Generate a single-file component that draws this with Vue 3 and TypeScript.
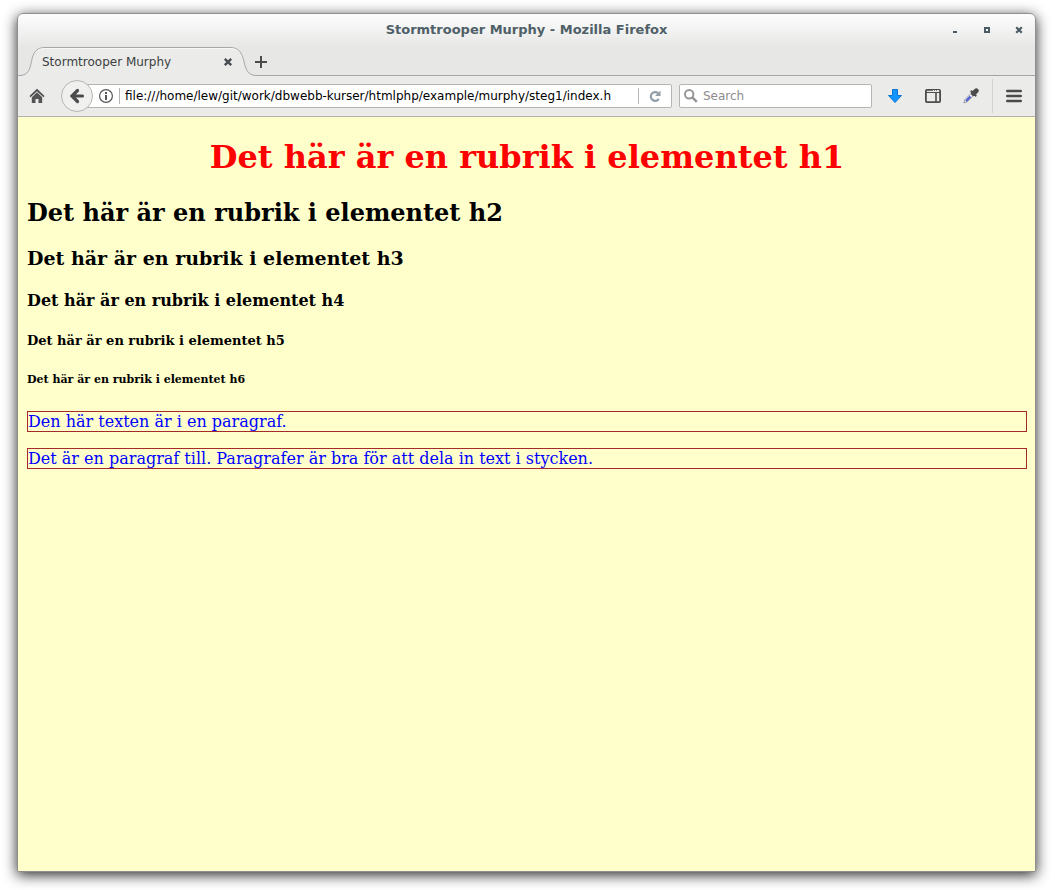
<script setup lang="ts">
import { ref } from 'vue'

const title = 'Stormtrooper Murphy'
const address = ref('file:///home/lew/git/work/dbwebb-kurser/htmlphp/example/murphy/steg1/index.h')
const query = ref('')
const paragraphs: string[] = [
  'Den här texten är i en paragraf.',
  'Det är en paragraf till. Paragrafer är bra för att dela in text i stycken.',
]
</script>

<template>
  <div class="desktop">
    <div class="window">
      <header class="titlebar">
        <span class="window-title">{{ title }} - Mozilla Firefox</span>
        <div class="window-buttons">
          <button aria-label="Minimize">
            <svg width="8" height="8" viewBox="0 0 8 8"><path d="M2 5h4v2H2z" fill="#4b5b63" /></svg>
          </button>
          <button aria-label="Maximize">
            <svg width="8" height="8" viewBox="0 0 8 8"><path d="M2 2h4v4H2z" fill="#fff" stroke="#4b5b63" stroke-width="2" /></svg>
          </button>
          <button aria-label="Close">
            <svg width="8" height="8" viewBox="0 0 8 8"><path d="M2 2l4 4M6 2L2 6" stroke="#4b5b63" stroke-width="2.2" stroke-linecap="square" /></svg>
          </button>
        </div>
      </header>

      <div class="tabs">
        <div class="tab">
          <svg class="tab-shape" width="240" height="30" viewBox="0 0 240 30" aria-hidden="true">
            <path d="M0 30V28.500H2C10 28.500 12 22 13.500 14.500C15 6 18 .5 27 .5H212C221 .5 224 6 226 14.500C227.500 22 230 28.500 238 28.500H240V30Z" fill="#ebebea" />
            <path d="M0 28.500H2C10 28.500 12 22 13.500 14.500C15 6 18 .5 27 .5H212C221 .5 224 6 226 14.500C227.500 22 230 28.500 238 28.500H240" fill="none" stroke="#a5a8ab" />
            <path d="M20 3.500Q23 1.500 27 1.500H212Q216 1.500 219 3.500" fill="none" stroke="#f8f8f8" />
          </svg>
          <span class="tab-label">{{ title }}</span>
          <button class="tab-close" aria-label="Close tab">
            <svg width="10" height="10" viewBox="0 0 10 10"><path d="M1.800 1.800l6.400 6.400M8.200 1.800L1.800 8.200" stroke="#484d50" stroke-width="2.400" /></svg>
          </button>
        </div>
        <button class="new-tab" aria-label="New tab">
          <svg width="12" height="12" viewBox="0 0 12 12"><path d="M6 0v12M0 6h12" stroke="#4c4c4c" stroke-width="2" /></svg>
        </button>
      </div>

      <nav class="toolbar">
        <button class="home" aria-label="Home">
          <svg width="16" height="16" viewBox="0 0 16 16">
            <path d="M8 .8L15.500 8l-1 1.300L8 3.200 1.500 9.300.5 8Z" fill="#4c4c4c" />
            <path d="M8 4.200l5.200 5V15H9.500v-4h-3v4H2.800V9.200Z" fill="#555" />
          </svg>
        </button>
        <button class="back" aria-label="Back">
          <svg width="16" height="16" viewBox="0 0 16 16"><path d="M8.500 2.500L3 8l5.500 5.500M3.500 8h10" fill="none" stroke="#4c4c4c" stroke-width="3.200" stroke-linecap="round" /></svg>
        </button>
        <div class="address">
          <svg class="info" width="14" height="14" viewBox="0 0 14 14" aria-hidden="true">
            <circle cx="7" cy="7" r="6.400" fill="none" stroke="#555" stroke-width="1.200" />
            <path d="M6 3h2v2H6zM6 6h2v5H6z" fill="#555" />
          </svg>
          <input v-model="address" aria-label="Address" spellcheck="false" />
          <button aria-label="Reload">
            <svg width="12" height="12" viewBox="0 0 12 12">
              <path d="M9.200 3.200A4.400 4.400 0 1 0 9.800 9" fill="none" stroke="#929da6" stroke-width="2.200" />
              <path d="M11.500.5V6H6Z" fill="#929da6" />
            </svg>
          </button>
        </div>
        <div class="search">
          <svg width="14" height="14" viewBox="0 0 14 14" aria-hidden="true">
            <circle cx="5.200" cy="5.200" r="4.200" fill="none" stroke="#969696" stroke-width="2" />
            <path d="M8.300 8.300l4.500 4.500" stroke="#969696" stroke-width="2.600" />
          </svg>
          <input v-model="query" aria-label="Search" placeholder="Search" />
        </div>
        <div class="tools">
          <button aria-label="Downloads">
            <svg width="16" height="16" viewBox="0 0 16 16"><path d="M5.500 1.500h5v6h4L8 14.500 1.500 7.500h4Z" fill="#1295ff" stroke="#0d73d0" /></svg>
          </button>
          <button aria-label="Sidebar">
            <svg width="16" height="16" viewBox="0 0 16 16">
              <rect x=".9" y="1.900" width="14.200" height="12.200" rx="1" fill="none" stroke="#4c4c4c" stroke-width="1.800" />
              <path d="M1 4.500h14" stroke="#4c4c4c" />
              <path d="M8 2.500h1M10 2.500h1M12 2.500h2" stroke="#eee" />
              <path d="M11 5v9" stroke="#4c4c4c" stroke-width="1.600" />
            </svg>
          </button>
          <button aria-label="Eyedropper">
            <svg width="16" height="16" viewBox="0 0 16 16">
              <path d="M9 4.500L2 11.500.8 14.800 4.300 13.800 11.300 6.800" fill="#eceef5" stroke="#96989f" />
              <path d="M7.500 8.500L3 13" stroke="#4a5cd8" stroke-width="2" />
              <path d="M8.500 3.500l4 4" stroke="#4c4c4c" stroke-width="2.400" stroke-linecap="round" />
              <path d="M10.500 5.500L13.300 2.700" stroke="#4c4c4c" stroke-width="4.800" stroke-linecap="round" />
            </svg>
          </button>
          <span class="divider"></span>
          <button aria-label="Menu">
            <svg width="16" height="14" viewBox="0 0 16 14"><path d="M1.300 2h13.400M1.300 7h13.400M1.300 12h13.400" stroke="#4a4a4a" stroke-width="2.600" stroke-linecap="round" /></svg>
          </button>
        </div>
      </nav>

      <main class="page">
        <h1>Det här är en rubrik i elementet h1</h1>
        <h2>Det här är en rubrik i elementet h2</h2>
        <h3>Det här är en rubrik i elementet h3</h3>
        <h4>Det här är en rubrik i elementet h4</h4>
        <h5>Det här är en rubrik i elementet h5</h5>
        <h6>Det här är en rubrik i elementet h6</h6>
        <p v-for="text in paragraphs" :key="text">{{ text }}</p>
      </main>
    </div>
  </div>
</template>

<style>
body {
  margin: 0;
  background: #fff;
}
</style>

<style scoped>
.desktop {
  box-sizing: border-box;
  min-height: 100vh;
  padding: 13px 19px 18px 17px;
  display: flex;
  font-family: "DejaVu Sans", sans-serif;
  font-size: 12px;
}
.window {
  flex: 1;
  min-width: 0;
  display: flex;
  flex-direction: column;
  border: 1px solid #8f8f8f;
  border-radius: 6px 6px 0 0;
  background: linear-gradient(#fdfdfd, #e7e7e6 33px);
  box-shadow: 0 3px 14px rgba(0, 0, 0, 0.85);
}
button {
  display: grid;
  place-items: center;
  padding: 0;
  border: 0;
  background: none;
}
svg {
  display: block;
  flex: none;
}
input {
  min-width: 0;
  flex: 1;
  padding: 0;
  border: 0;
  outline: 0;
  background: none;
  font: inherit;
  color: #000;
}
.titlebar {
  display: grid;
  grid-template-columns: 1fr auto 1fr;
  align-items: center;
  box-sizing: border-box;
  height: 33px;
  padding-bottom: 2px;
}
.window-title {
  grid-column: 2;
  font-size: 13px;
  font-weight: bold;
  color: #4f6068;
}
.window-buttons {
  display: flex;
  justify-content: flex-end;
  gap: 24px;
  padding-right: 12px;
}
.tabs {
  display: flex;
  height: 28px;
  border-bottom: 1px solid #a3a5a6;
}
.tab {
  position: relative;
  box-sizing: border-box;
  width: 240px;
  display: flex;
  align-items: center;
  justify-content: space-between;
  padding: 1px 25px 0 24px;
}
.tab-shape {
  position: absolute;
  left: 0;
  top: 0;
}
.tab-label,
.tab-close {
  position: relative;
  color: #3c3f41;
}
.new-tab {
  width: 6px;
  padding-top: 1px;
  justify-content: center;
}
.toolbar {
  display: flex;
  align-items: center;
  box-sizing: border-box;
  height: 41px;
  padding: 0 13px 0 11px;
  background: #ebebea;
  border-bottom: 1px solid #b1b1ae;
}
.back {
  position: relative;
  box-sizing: border-box;
  width: 32px;
  height: 32px;
  margin-left: 16px;
  border: 1px solid #b5b5b3;
  border-radius: 50%;
  background: #f0f0ef;
}
.address,
.search {
  display: flex;
  align-items: center;
  box-sizing: border-box;
  height: 24px;
  border: 1px solid #b5b5b3;
  border-radius: 2px;
  background: #fff;
}
.address {
  flex: 3 1 0;
  margin-left: -8px;
  padding-left: 13px;
}
.address input {
  height: 16px;
  margin-left: 6px;
  padding-left: 5px;
  border-left: 1px solid #b5b5b3;
}
.address button {
  width: 33px;
  height: 16px;
  margin-left: 16px;
  border-left: 1px solid #b5b5b3;
}
.search {
  flex: 0 1 193px;
  gap: 5px;
  margin-left: 7px;
  padding: 0 4px;
}
.search input::placeholder {
  color: #8c8c8c;
  opacity: 1;
}
.tools {
  display: flex;
  align-items: center;
  gap: 22px;
  margin-left: 15px;
}
.divider {
  width: 1px;
  height: 34px;
  margin: 0 -10px 0 -9px;
  background: #d3d3d2;
}
.tools button:last-child {
  margin-left: 1px;
}
.page {
  flex: 1;
  padding: 0 8px 0 9px;
  background: #ffffcc;
  font-family: "DejaVu Serif", serif;
  font-size: 16px;
  color: #000;
}
h1 {
  margin: 21px 0 22px;
  font-size: 32px;
  text-align: center;
  color: #ff0000;
}
h2 {
  margin: 20px 0;
  font-size: 24px;
}
h3 {
  margin: 19px 0;
  font-size: 19px;
}
h4 {
  margin: 22px 0;
  font-size: 16px;
}
h5 {
  margin: 23px 0;
  font-size: 13px;
}
h6 {
  margin: 25px 0;
  font-size: 11px;
}
p {
  margin: 16px 0;
  border: 1px solid #a52a2a;
  color: #0000ff;
}
</style>
